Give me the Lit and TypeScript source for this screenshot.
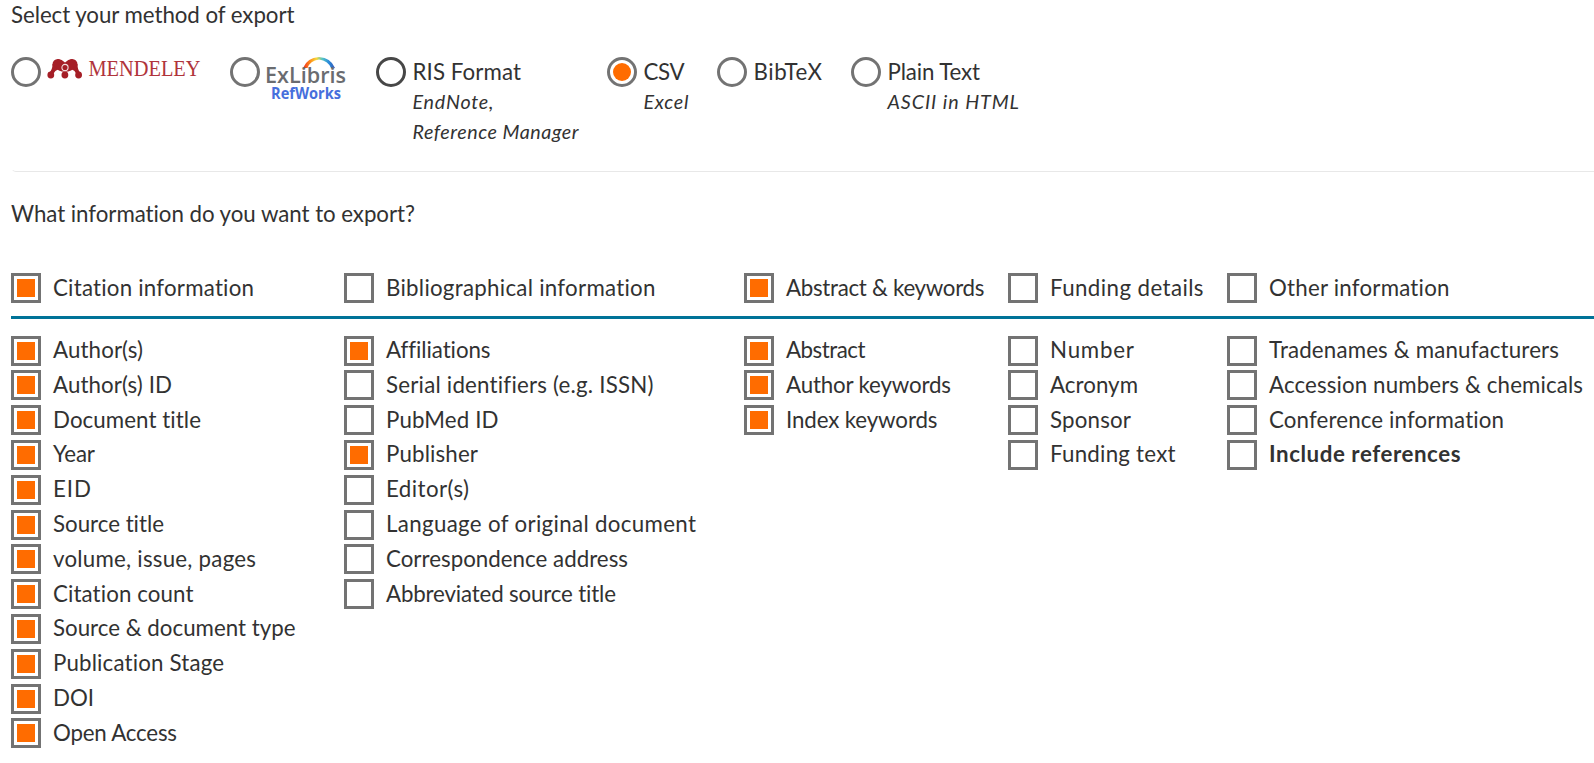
import { LitElement, html, css, svg } from "lit";
import { customElement, property } from "lit/decorators.js";

type Item = [label: string, width: number, checked?: boolean, bold?: boolean];

/** A single line of text, tracked so that it fills the given width. */
@customElement("fit-text")
class FitText extends LitElement {
  @property() text = "";
  @property({ type: Number }) width = 0;
  static styles = css`
    :host { display: inline-block; white-space: nowrap; }
    .line { display: inline-block; white-space: nowrap; }
  `;
  render() {
    return html`<span class="line">${this.text}</span>`;
  }
  updated() {
    const line = this.renderRoot.querySelector(".line") as HTMLElement;
    line.style.letterSpacing = "0.001px";
    const natural = line.getBoundingClientRect().width;
    line.style.letterSpacing = `${(this.width - natural) / Math.max(1, this.text.length - 1)}px`;
  }
}

@customElement("check-item")
class CheckItem extends LitElement {
  @property({ attribute: false }) item: Item = ["", 0];
  static styles = css`
    :host { display: flex; align-items: flex-start; gap: 12px; height: 30px; }
    .box { box-sizing: border-box; flex: none; width: 30px; height: 30px; border: 3px solid #737373; padding: 3px; background: #fff; }
    .fill { width: 18px; height: 18px; background: #ff6c00; }
    .label { line-height: 30px; margin-top: var(--label-shift, 0); }
    .bold { font-weight: 700; }
  `;
  render() {
    const [label, width, checked, bold] = this.item;
    return html`<div class="box">${checked ? html`<div class="fill"></div>` : ""}</div>
      <fit-text class="label ${bold ? "bold" : ""}" .text=${label} .width=${width}></fit-text>`;
  }
}

const groups: { head: Item; items: Item[] }[] = [
  {
    head: ["Citation information", 201, true],
    items: [
      ["Author(s)", 90, true], ["Author(s) ID", 119, true], ["Document title", 148, true], ["Year", 42, true],
      ["EID", 38, true], ["Source title", 111, true], ["volume, issue, pages", 203, true],
      ["Citation count", 140.5, true], ["Source & document type", 242.5, true],
      ["Publication Stage", 171, true], ["DOI", 41, true], ["Open Access", 124, true],
    ],
  },
  {
    head: ["Bibliographical information", 269.5],
    items: [
      ["Affiliations", 104.5, true], ["Serial identifiers (e.g. ISSN)", 267.5], ["PubMed ID", 112.5],
      ["Publisher", 92, true], ["Editor(s)", 83], ["Language of original document", 310],
      ["Correspondence address", 242], ["Abbreviated source title", 230],
    ],
  },
  {
    head: ["Abstract & keywords", 198.5, true],
    items: [["Abstract", 79.5, true], ["Author keywords", 165, true], ["Index keywords", 151.5, true]],
  },
  {
    head: ["Funding details", 153.5],
    items: [["Number", 84], ["Acronym", 88], ["Sponsor", 81], ["Funding text", 125.5]],
  },
  {
    head: ["Other information", 180.5],
    items: [
      ["Tradenames & manufacturers", 290], ["Accession numbers & chemicals", 314],
      ["Conference information", 235], ["Include references", 191.5, false, true],
    ],
  },
];

const mendeley = svg`
  <g fill="#a51e26">
    <circle cx="10.800" cy="7.200" r="5.300"/><circle cx="25.200" cy="7.200" r="5.300"/>
    <path d="M10.800 1.900 Q15 2.200 18 5.500 Q21 2.200 25.200 1.900 L27 11 Q24 15 18 14.800 Q12 15 9 11 Z"/>
    <path d="M5.500 7 L11 12.500 Q8 13.500 6.500 16.500 L2.500 15.500 Q5.500 12.500 5.500 7 Z"/>
    <path d="M30.500 7 L25 12.500 Q28 13.500 29 16.500 L33 15.500 Q30.500 12.500 30.500 7 Z"/>
    <circle cx="3.800" cy="18" r="3.400"/><circle cx="17.900" cy="18" r="3.400"/><circle cx="31.600" cy="18" r="3.400"/>
  </g>
  <circle cx="18" cy="10.500" r="3.100" fill="#a51e26" stroke="#fff" stroke-opacity=".85" stroke-width="1.100"/>`;

@customElement("app-root")
class AppRoot extends LitElement {
  static styles = css`
    :host { display: block; width: 100%; height: 763px; overflow: hidden; box-sizing: border-box; padding-left: 11px; background: #fff; color: #323232; font: 22.300px/30px Lato, "Open Sans", sans-serif; }
    .title { display: block; height: 30px; }
    .methods { display: grid; grid-template-columns: 219px 146px 231px 110px 134px auto; height: 114px; margin-top: 27px; }
    .method { display: flex; align-items: flex-start; gap: 6.500px; }
    .radio { box-sizing: border-box; flex: none; width: 30px; height: 30px; border: 3px solid #737373; border-radius: 50%; padding: 3px; }
    .radio.dark { border-color: #474747; }
    .dot { width: 18px; height: 18px; border-radius: 50%; background: #ff6c00; }
    .words { display: flex; flex-direction: column; align-items: flex-start; }
    .sub { font-size: 19.700px; font-style: italic; line-height: 30px; height: 30px; }
    .name { height: 30px; line-height: 29px; }
    .logo { display: block; margin-left: -1px; overflow: visible; }
    .mendeley { fill: #b0343b; font: 22.500px "Liberation Serif", serif; }
    .exlibris { fill: #6a6c70; font: 600 21.800px "Open Sans", sans-serif; }
    .refworks { fill: #466fdc; font: 700 16.300px "Open Sans", sans-serif; }
    .rule { height: 8px; margin-bottom: 27px; border-bottom: 1px solid #e8e8e8; border-left: 1px solid transparent; border-radius: 0 0 0 5px; margin-top: -8px; }
    .grid { display: grid; grid-template-columns: 333px 400px 264px 219px auto; }
    .head { margin-top: 44px; height: 43px; border-bottom: 3px solid #007398; }
    .lists { padding-top: 16.600px; --label-shift: -0.500px; }
    .list { display: flex; flex-direction: column; gap: 4.800px; }
  `;
  private radio(on = false, dark = false) {
    return html`<div class="radio ${dark ? "dark" : ""}">${on ? html`<div class="dot"></div>` : ""}</div>`;
  }
  private words(name: Item, subs: Item[] = []) {
    return html`<div class="words">
      <fit-text class="name" .text=${name[0]} .width=${name[1]}></fit-text>
      ${subs.map((s) => html`<fit-text class="sub" .text=${s[0]} .width=${s[1]}></fit-text>`)}
    </div>`;
  }
  render() {
    return html`
      <fit-text class="title" .text=${"Select your method of export"} .width=${283.5}></fit-text>
      <div class="methods">
        <div class="method">${this.radio()}
          <svg class="logo" width="160" height="34" viewBox="0 0 160 34">
            ${mendeley}
            <text class="mendeley" x="41.500" y="19" textLength="112" lengthAdjust="spacingAndGlyphs">MENDELEY</text>
          </svg>
        </div>
        <div class="method">${this.radio()}
          <svg class="logo" width="84" height="46" viewBox="0 0 84 46">
            <defs>
              <linearGradient id="arc">
                <stop offset="0" stop-color="#f02a20"/><stop offset=".22" stop-color="#ff8a18"/>
                <stop offset=".42" stop-color="#f6d83a"/><stop offset=".6" stop-color="#58c5c4"/>
                <stop offset=".8" stop-color="#2b8ddb"/><stop offset="1" stop-color="#3455b5"/>
              </linearGradient>
            </defs>
            <path d="M37 11 Q41 .8 53 0 Q65 .8 69 11 L65 11 Q62 3.500 53 2.400 Q44 3.500 41.500 11 Z" fill="url(#arc)"/>
            <text class="exlibris" x="-1" y="26" textLength="81" lengthAdjust="spacingAndGlyphs">ExLibris</text>
            <text class="refworks" x="5" y="42.300" textLength="70" lengthAdjust="spacingAndGlyphs">RefWorks</text>
          </svg>
        </div>
        <div class="method">${this.radio(false, true)}${this.words(["RIS Format", 108.5], [["EndNote,", 81], ["Reference Manager", 166]])}</div>
        <div class="method">${this.radio(true)}${this.words(["CSV", 41], [["Excel", 45]])}</div>
        <div class="method">${this.radio()}${this.words(["BibTeX", 68.5])}</div>
        <div class="method">${this.radio()}${this.words(["Plain Text", 92.5], [["ASCII in HTML", 131.5]])}</div>
      </div>
      <div class="rule"></div>
      <fit-text class="title" .text=${"What information do you want to export?"} .width=${404}></fit-text>
      <div class="grid head">${groups.map((g) => html`<check-item .item=${g.head}></check-item>`)}</div>
      <div class="grid lists">
        ${groups.map((g) => html`<div class="list">${g.items.map((i) => html`<check-item .item=${i}></check-item>`)}</div>`)}
      </div>`;
  }
}
